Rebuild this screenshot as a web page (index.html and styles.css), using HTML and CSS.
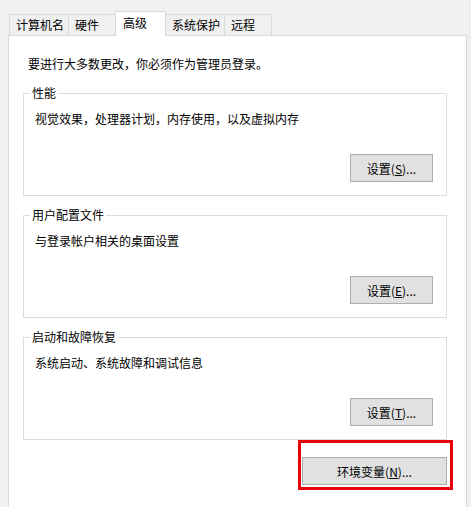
FILE: index.html
```html
<!DOCTYPE html>
<html lang="zh-CN">
<head>
    <meta charset="UTF-8">
    <title>系统属性 - 高级</title>
    <link rel="stylesheet" href="styles.css">
</head>
<body>
    <div class="tabs">
        <div class="tab">计算机名</div>
        <div class="tab">硬件</div>
        <div class="tab active">高级</div>
        <div class="tab">系统保护</div>
        <div class="tab">远程</div>
    </div>

    <div class="panel">
        <p class="intro">要进行大多数更改，你必须作为管理员登录。</p>

        <div class="group">
            <span class="legend">性能</span>
            <p class="desc">视觉效果，处理器计划，内存使用，以及虚拟内存</p>
            <button class="btn">设置(<u>S</u>)...</button>
        </div>

        <div class="group">
            <span class="legend">用户配置文件</span>
            <p class="desc">与登录帐户相关的桌面设置</p>
            <button class="btn">设置(<u>E</u>)...</button>
        </div>

        <div class="group">
            <span class="legend">启动和故障恢复</span>
            <p class="desc">系统启动、系统故障和调试信息</p>
            <button class="btn">设置(<u>T</u>)...</button>
        </div>

        <div class="env-row">
            <div class="env-wrap">
                <button class="btn env-btn">环境变量(<u>N</u>)...</button>
                <div class="highlight"></div>
            </div>
        </div>
    </div>
</body>
</html>
```

FILE: styles.css
```css
html, body {
    overflow: hidden;
}
body {
    margin: 0;
    background-color: #f0f0f0;
    font-family: "Noto Sans CJK SC", "Microsoft YaHei", sans-serif;
    font-size: 12px;
    line-height: 16px;
    color: #000;
}
.tabs {
    display: flex;
    align-items: flex-end;
    height: 36px;
    padding-left: 9px;
    margin-bottom: -1px;
    position: relative;
    z-index: 1;
}
.tab {
    box-sizing: border-box;
    height: 21px;
    min-width: 48px;
    padding: 0 4px 0 6px;
    margin-bottom: 1px;
    margin-left: -1px;
    line-height: 20px;
    border: 1px solid #d9d9d9;
    border-bottom: none;
    background-color: #f0f0f0;
    white-space: nowrap;
}
.tab:first-child {
    margin-left: 0;
}
.tab.active {
    height: 25px;
    min-width: 51px;
    padding-left: 7px;
    margin-bottom: 0;
    line-height: 22px;
    background-color: #fff;
    position: relative;
    z-index: 2;
}
.panel {
    box-sizing: border-box;
    width: 459px;
    height: 490px;
    margin-left: 8px;
    padding: 20px 0 0 0;
    background-color: #fff;
    border: 1px solid #d9d9d9;
}
.intro {
    margin: 0 0 21px 19px;
}
.group {
    box-sizing: border-box;
    width: 424px;
    height: 103px;
    margin-left: 14px;
    padding: 17px 13px 0 11px;
    border: 1px solid #dcdcdc;
    position: relative;
    display: flex;
    flex-direction: column;
    align-items: flex-end;
}
.group + .group {
    margin-top: 19px;
}
.legend {
    position: absolute;
    top: -9px;
    left: 6px;
    padding: 0 2px;
    background-color: #fff;
}
.desc {
    margin: 0;
    align-self: flex-start;
}
.btn {
    box-sizing: border-box;
    width: 83px;
    height: 28px;
    margin-top: 27px;
    padding: 0;
    font-family: inherit;
    font-size: 12px;
    color: #000;
    background-color: #e1e1e1;
    border: 1px solid #adadad;
}
.env-row {
    width: 424px;
    margin: 17px 0 0 14px;
    display: flex;
    justify-content: flex-end;
}
.env-wrap {
    position: relative;
}
.env-btn {
    display: block;
    width: 145px;
    margin-top: 0;
}
.highlight {
    position: absolute;
    top: -17px;
    left: -4px;
    right: -6px;
    bottom: -5px;
    border: 3px solid #e8000b;
}
```
